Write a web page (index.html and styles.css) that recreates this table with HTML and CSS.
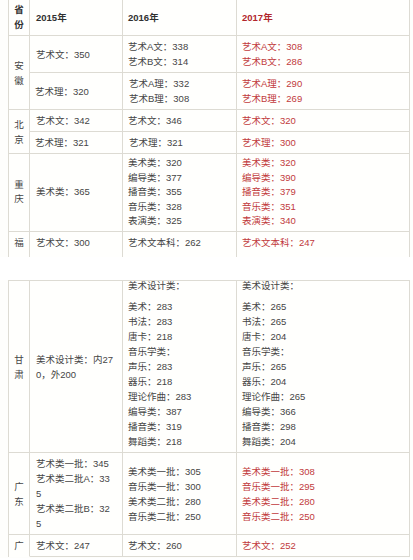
FILE: index.html
```html
<!DOCTYPE html>
<html lang="zh-CN">
<head>
<meta charset="utf-8">
<title>艺术类分数线</title>
<link rel="stylesheet" href="styles.css">
</head>
<body>
<div class="page">
  <div class="shot shot-top">
    <table class="scores scores-top">
      <colgroup>
        <col class="c-prov"><col class="c-2015"><col class="c-2016"><col class="c-2017">
      </colgroup>
      <tr class="head">
        <td class="prov">省份</td>
        <td>2015年</td>
        <td>2016年</td>
        <td class="hot">2017年</td>
      </tr>
      <tr>
        <td class="prov" rowspan="2">安徽</td>
        <td>艺术文：350</td>
        <td>艺术A文：338<br>艺术B文：314</td>
        <td class="hot">艺术A文：308<br>艺术B文：286</td>
      </tr>
      <tr>
        <td>艺术理：320</td>
        <td>艺术A理：332<br>艺术B理：308</td>
        <td class="hot">艺术A理：290<br>艺术B理：269</td>
      </tr>
      <tr>
        <td class="prov" rowspan="2">北京</td>
        <td>艺术文：342</td>
        <td>艺术文：346</td>
        <td class="hot">艺术文：320</td>
      </tr>
      <tr>
        <td>艺术理：321</td>
        <td>艺术理：321</td>
        <td class="hot">艺术理：300</td>
      </tr>
      <tr class="tight">
        <td class="prov">重庆</td>
        <td>美术类：365</td>
        <td>美术类：320<br>编导类：377<br>播音类：355<br>音乐类：328<br>表演类：325</td>
        <td class="hot">美术类：320<br>编导类：390<br>播音类：379<br>音乐类：351<br>表演类：340</td>
      </tr>
      <tr class="cut">
        <td class="prov">福</td>
        <td>艺术文：300</td>
        <td>艺术文本科：262</td>
        <td class="hot">艺术文本科：247</td>
      </tr>
    </table>
  </div>

  <div class="shot shot-bottom">
    <table class="scores">
      <colgroup>
        <col class="c-prov"><col class="c-2015"><col class="c-2016"><col class="c-2017">
      </colgroup>
      <tr class="gansu">
        <td class="prov">甘肃</td>
        <td>美术设计类：内27<br>0，外200</td>
        <td class="list"><span class="lead">美术设计类：</span>美术：283<br>书法：283<br>唐卡：218<br>音乐学类：<br>声乐：283<br>器乐：218<br>理论作曲：283<br>编导类：387<br>播音类：319<br>舞蹈类：218</td>
        <td class="list"><span class="lead">美术设计类：</span>美术：265<br>书法：265<br>唐卡：204<br>音乐学类：<br>声乐：265<br>器乐：204<br>理论作曲：265<br>编导类：366<br>播音类：298<br>舞蹈类：204</td>
      </tr>
      <tr>
        <td class="prov">广东</td>
        <td>艺术类一批：345<br>艺术类二批A：33<br>5<br>艺术类二批B：32<br>5</td>
        <td>美术类一批：305<br>音乐类一批：300<br>美术类二批：280<br>音乐类二批：250</td>
        <td class="hot">美术类一批：308<br>音乐类一批：295<br>美术类二批：280<br>音乐类二批：250</td>
      </tr>
      <tr class="cut-bottom">
        <td class="prov open">广</td>
        <td>艺术文：247</td>
        <td>艺术文：260</td>
        <td class="hot">艺术文：252</td>
      </tr>
    </table>
  </div>
</div>
</body>
</html>
```

FILE: styles.css
```css
html, body {
  margin: 0;
  padding: 0;
  background: #ffffff;
}

.page {
  width: 413px;
  height: 560px;
  overflow: hidden;
  font-family: "Liberation Sans", "Noto Sans CJK SC", sans-serif;
  font-size: 9.5px;
  line-height: 15px;
  color: #454545;
}

.shot {
  overflow: hidden;
  background: #fefefc;
}

.shot-top {
  height: 257px;
}

.shot-bottom {
  height: 278px;
  margin-top: 23px;
}

.scores {
  margin-left: 8px;
  width: 402px;
  table-layout: fixed;
  border-collapse: separate;
  border-spacing: 0;
  border-top: 1px solid #dddbd3;
  border-left: 1px solid #dddbd3;
  background: #fffffd;
}

.scores-top {
  margin-top: -2px;
}

.c-prov { width: 21px; }
.c-2015 { width: 93px; }
.c-2016 { width: 114px; }
.c-2017 { width: 173px; }

.scores td {
  box-sizing: border-box;
  padding: 3px 6px 3px 5px;
  vertical-align: middle;
  border-right: 1px solid #dddbd3;
  border-bottom: 1px solid #dddbd3;
  white-space: nowrap;
}

.scores td:nth-child(2) {
  padding-left: 6px;
}

.scores td.prov {
  padding: 3px 5px;
  text-align: center;
  white-space: normal;
}

.scores td.hot {
  color: #c13a3c;
}

.head td {
  font-weight: bold;
  color: #303030;
}

.head td.hot {
  color: #b2262c;
}

.tight td {
  padding-top: 2px;
  padding-bottom: 2px;
  line-height: 14.6px;
}

.cut td {
  vertical-align: top;
  padding-bottom: 12px;
}

.gansu td.list {
  vertical-align: top;
  padding-top: 0;
  padding-bottom: 3px;
}

.lead {
  display: block;
  line-height: 10px;
  margin-bottom: 8px;
}

.cut-bottom td.open {
  border-bottom-color: transparent;
}
```
